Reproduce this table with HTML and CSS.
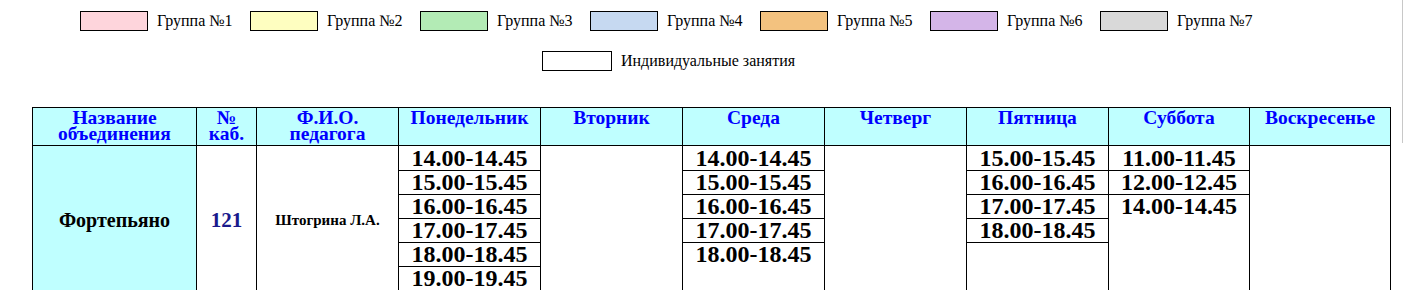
FILE: index.html
```html
<!DOCTYPE html>
<html lang="ru">
<head>
<meta charset="utf-8">
<title>Расписание</title>
<link rel="stylesheet" href="styles.css">
</head>
<body>
<div class="page">
  <div class="legend">
    <div class="legend-row groups">
      <div class="item"><span class="swatch g1"></span><span class="label">Группа №1</span></div>
      <div class="item"><span class="swatch g2"></span><span class="label">Группа №2</span></div>
      <div class="item"><span class="swatch g3"></span><span class="label">Группа №3</span></div>
      <div class="item"><span class="swatch g4"></span><span class="label">Группа №4</span></div>
      <div class="item"><span class="swatch g5"></span><span class="label">Группа №5</span></div>
      <div class="item"><span class="swatch g6"></span><span class="label">Группа №6</span></div>
      <div class="item"><span class="swatch g7"></span><span class="label">Группа №7</span></div>
    </div>
    <div class="legend-row single">
      <div class="item"><span class="swatch ind"></span><span class="label">Индивидуальные занятия</span></div>
    </div>
  </div>

  <table class="schedule">
    <colgroup>
      <col class="c-name"><col class="c-room"><col class="c-teacher">
      <col class="c-day"><col class="c-day"><col class="c-day"><col class="c-day">
      <col class="c-day"><col class="c-day2"><col class="c-day2">
    </colgroup>
    <thead>
      <tr>
        <th>Название<br>объединения</th>
        <th>№<br>каб.</th>
        <th>Ф.И.О.<br>педагога</th>
        <th>Понедельник</th>
        <th>Вторник</th>
        <th>Среда</th>
        <th>Четверг</th>
        <th>Пятница</th>
        <th>Суббота</th>
        <th>Воскресенье</th>
      </tr>
    </thead>
    <tbody>
      <tr>
        <td class="name">Фортепьяно</td>
        <td class="room">121</td>
        <td class="teacher">Штогрина Л.А.</td>
        <td class="day">
          <div class="slot">14.00-14.45</div>
          <div class="slot">15.00-15.45</div>
          <div class="slot">16.00-16.45</div>
          <div class="slot">17.00-17.45</div>
          <div class="slot">18.00-18.45</div>
          <div class="slot last">19.00-19.45</div>
        </td>
        <td class="day"></td>
        <td class="day">
          <div class="slot">14.00-14.45</div>
          <div class="slot">15.00-15.45</div>
          <div class="slot">16.00-16.45</div>
          <div class="slot">17.00-17.45</div>
          <div class="slot last">18.00-18.45</div>
        </td>
        <td class="day"></td>
        <td class="day">
          <div class="slot">15.00-15.45</div>
          <div class="slot">16.00-16.45</div>
          <div class="slot">17.00-17.45</div>
          <div class="slot">18.00-18.45</div>
        </td>
        <td class="day">
          <div class="slot">11.00-11.45</div>
          <div class="slot">12.00-12.45</div>
          <div class="slot last">14.00-14.45</div>
        </td>
        <td class="day"></td>
      </tr>
    </tbody>
  </table>
</div>
</body>
</html>
```

FILE: styles.css
```css
html, body {
  margin: 0;
  padding: 0;
  background: #ffffff;
}

body {
  font-family: "Liberation Serif", "Times New Roman", serif;
  color: #000000;
}

.page {
  position: relative;
  width: 1403px;
}

.page::after {
  content: "";
  position: absolute;
  left: 1402px;
  top: 0;
  width: 1px;
  height: 143px;
  background: #c8c8c8;
}

/* Legend */
.legend-row {
  display: grid;
}

.legend-row.groups {
  grid-template-columns: repeat(7, 170px);
  padding: 11px 0 0 80px;
}

.legend-row.single {
  grid-template-columns: auto;
  justify-content: start;
  padding: 20px 0 0 542px;
}

.item {
  display: flex;
  align-items: center;
  gap: 9px;
  height: 20px;
}

.swatch {
  display: block;
  width: 68px;
  height: 20px;
  box-sizing: border-box;
  border: 1px solid #000000;
  flex: none;
}

.single .swatch {
  width: 70px;
}

.label {
  font-size: 16px;
  line-height: 20px;
  white-space: nowrap;
}

.g1 { background: #fed5dc; }
.g2 { background: #fefec0; }
.g3 { background: #b3ebb5; }
.g4 { background: #c6d9f1; }
.g5 { background: #f3c27f; }
.g6 { background: #d4b5e8; }
.g7 { background: #d9d9d9; }
.ind { background: #ffffff; }

/* Schedule table */
.schedule {
  margin: 36px 0 0 32px;
  border-collapse: collapse;
  table-layout: fixed;
  width: 1358px;
}

.c-name { width: 164px; }
.c-room { width: 60px; }
.c-teacher { width: 142px; }
.c-day { width: 142px; }
.c-day2 { width: 141px; }

.schedule th,
.schedule td {
  border: 1px solid #000000;
  padding: 0;
}

.schedule th {
  background: #bfffff;
  color: #0000ff;
  font-size: 19.5px;
  font-weight: bold;
  line-height: 16px;
  vertical-align: top;
  text-align: center;
  padding-top: 2px;
  height: 35px;
}

.schedule td {
  height: 148px;
  text-align: center;
  vertical-align: middle;
  font-weight: bold;
}

.schedule td.name {
  background: #bfffff;
  font-size: 20px;
}

.schedule td.room {
  color: #1a1a8c;
  font-size: 21px;
}

.schedule td.teacher {
  font-size: 15px;
}

.schedule td.day {
  vertical-align: top;
}

.slot {
  height: 23px;
  font-size: 24px;
  line-height: 23px;
  padding-top: 1px;
  font-weight: bold;
  text-align: center;
  border-bottom: 1px solid #000000;
  box-sizing: content-box;
  white-space: nowrap;
}

.slot + .slot {
  padding-top: 0;
}

.slot.last {
  border-bottom: none;
}
```
